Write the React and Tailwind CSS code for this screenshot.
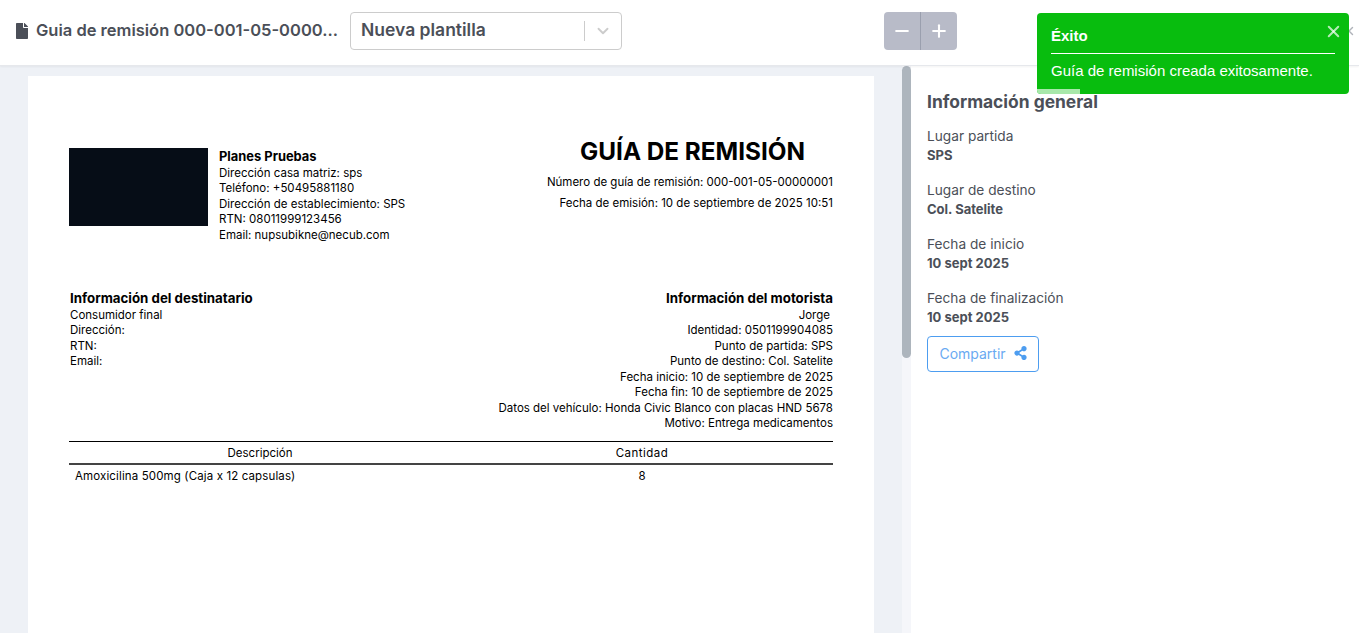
import React from "react";
import { X, ChevronDown, Minus, Plus } from "lucide-react";

const FONT = { fontFamily: "Inter, 'Liberation Sans', sans-serif" };

function FileIcon() {
  return (
    <svg width="12" height="16" viewBox="0 0 384 512" fill="#4b4f58">
      <path d="M224 136V0H24C10.7 0 0 10.7 0 24v464c0 13.3 10.7 24 24 24h336c13.300 0 24-10.700 24-24V160H248c-13.200 0-24-10.800-24-24zm160-14.100v6.100H256V0h6.100c6.400 0 12.500 2.500 17 7l97.900 98c4.500 4.500 7 10.600 7 16.900z" />
    </svg>
  );
}

function ShareIcon() {
  return (
    <svg width="13" height="14" viewBox="0 0 448 512" fill="#4d9df0">
      <path d="M352 320c-22.600 0-43.400 7.800-59.800 20.900l-102.500-64.100a96.600 96.600 0 0 0 0-41.700l102.500-64.100C308.600 184.200 329.400 192 352 192c53 0 96-43 96-96S405 0 352 0s-96 43-96 96c0 7.200.8 14.100 2.300 20.800L155.800 181C139.400 167.800 118.600 160 96 160c-53 0-96 43-96 96s43 96 96 96c22.600 0 43.400-7.800 59.800-20.900l102.500 64.100A96.300 96.300 0 0 0 256 416c0 53 43 96 96 96s96-43 96-96-43-96-96-96z" />
    </svg>
  );
}

function Info({ label, value, last }) {
  return (
    <div className={last ? "mb-[10px]" : "mb-[17px]"}>
      <div className="text-[13.7px] leading-[19px] text-[#4b4f58]">{label}</div>
      <div className="text-[13px] leading-[18px] font-bold text-[#4b4f58]">{value}</div>
    </div>
  );
}

export default function App() {
  return (
    <div className="relative h-[633px] w-[1359px] overflow-hidden bg-white" style={FONT}>
      <header className="relative z-10 flex h-[66px] items-center border-b border-[#e6e8ec] bg-white pb-[4px] pl-4 shadow-[0_1px_2px_rgba(0,0,0,0.05)]">
        <FileIcon />
        <div className="ml-2 w-[302px] truncate text-[16.5px] font-semibold text-[#4b4f58]">
          Guia de remisión 000-001-05-0000...
        </div>
        <div className="ml-[12px] flex h-[38px] w-[272px] items-center rounded border border-[#ccc] bg-white pl-[10px]">
          <span className="flex-1 text-[17.5px] font-semibold text-[#4b4f58]">Nueva plantilla</span>
          <span className="h-[20px] w-px bg-[#ccc]" />
          <ChevronDown className="mx-[9px] h-[18px] w-[18px] text-[#ccc]" strokeWidth={2.5} />
        </div>
        <div className="ml-[262px] flex h-[38px] overflow-hidden rounded">
          <div className="flex w-[37px] items-center justify-center border-r border-[#9a9fae] bg-[#b8bbc8] text-white">
            <Minus className="h-5 w-5" strokeWidth={2.5} />
          </div>
          <div className="flex w-[36px] items-center justify-center bg-[#b8bbc8] text-white">
            <Plus className="h-5 w-5" strokeWidth={2.5} />
          </div>
        </div>
        <X className="absolute left-[1342px] top-[24px] h-[14px] w-[14px] text-[#b0b3ba]" strokeWidth={2.5} />
      </header>

      <div className="flex h-[567px]">
        <main className="w-[902px] overflow-hidden bg-[#eef1f6] pl-[28px] pt-[10px]">
          <div className="h-[600px] w-[846px] bg-white pl-[41px] pr-[41px] pt-[72px] text-[11.5px] text-black">
            <div className="flex justify-between">
              <div className="flex">
                <div className="h-[78px] w-[139px] bg-[#060d17]" />
                <div className="ml-[11px] pt-[1px] leading-[15.6px]">
                  <div className="mb-[1px] text-[12.9px] font-bold">Planes Pruebas</div>
                  <div>Dirección casa matriz: sps</div>
                  <div>Teléfono: +50495881180</div>
                  <div>Dirección de establecimiento: SPS</div>
                  <div>RTN: 08011999123456</div>
                  <div>Email: nupsubikne@necub.com</div>
                </div>
              </div>
              <div className="-mt-[12px] flex flex-col items-end">
                <div className="mr-[28px] text-[24.3px] font-bold leading-[30px]">GUÍA DE REMISIÓN</div>
                <div className="mt-[8px] leading-[16px]">Número de guía de remisión: 000-001-05-00000001</div>
                <div className="mt-[5px] leading-[16px]">Fecha de emisión: 10 de septiembre de 2025 10:51</div>
              </div>
            </div>

            <div className="mt-[47px] flex justify-between leading-[15.45px]">
              <div>
                <div className="mb-[2px] pl-px text-[13.3px] font-bold">Información del destinatario</div>
                <div className="pl-px">Consumidor final</div>
                <div className="pl-px">Dirección:</div>
                <div className="pl-px">RTN:</div>
                <div className="pl-px">Email:</div>
              </div>
              <div className="text-right">
                <div className="mb-[2px] text-[13.3px] font-bold">Información del motorista</div>
                <div className="pr-[3px]">Jorge</div>
                <div>Identidad: 0501199904085</div>
                <div>Punto de partida: SPS</div>
                <div>Punto de destino: Col. Satelite</div>
                <div>Fecha inicio: 10 de septiembre de 2025</div>
                <div>Fecha fin: 10 de septiembre de 2025</div>
                <div>Datos del vehículo: Honda Civic Blanco con placas HND 5678</div>
                <div>Motivo: Entrega medicamentos</div>
              </div>
            </div>

            <div className="mt-[9.7px] grid h-[24px] grid-cols-2 border-t-[1.5px] border-b-2 border-t-black border-b-[#444] text-center leading-[22px]">
              <div>Descripción</div>
              <div className="tracking-[0.5px]">Cantidad</div>
            </div>
            <div className="grid grid-cols-2 pt-[3px] leading-[16px]">
              <div className="pl-[6px] tracking-[0.13px]">Amoxicilina 500mg (Caja x 12 capsulas)</div>
              <div className="text-center">8</div>
            </div>
          </div>
        </main>

        <div className="h-full w-[9px] bg-[#f5f6fa]">
          <div className="h-[292px] rounded-full bg-[#adb5bd]" />
        </div>

        <aside className="flex-1 bg-white pl-[16px] pt-[25px]">
          <h2 className="mb-[14px] text-[17.4px] font-bold leading-[22px] text-[#4b4f58]">Información general</h2>
          <Info label="Lugar partida" value="SPS" />
          <Info label="Lugar de destino" value="Col. Satelite" />
          <Info label="Fecha de inicio" value="10 sept 2025" />
          <Info label="Fecha de finalización" value="10 sept 2025" last />
          <button className="flex h-[36px] w-[112px] items-center justify-center gap-[8px] rounded border border-[#4d9df0] pb-[2px] text-[14px] text-[#6aaaf2]">
            Compartir <ShareIcon />
          </button>
        </aside>
      </div>

      <div
        className="absolute left-[1037px] top-[13px] z-20 h-[81px] w-[312px] overflow-hidden rounded bg-[#08bd0e] text-white"
        style={{ fontFamily: "'Liberation Sans', Arial, sans-serif" }}
      >
        <X className="absolute right-[6px] top-[9px] h-[19px] w-[19px] text-white/70" strokeWidth={2.5} />
        <div className="mx-[14px] border-b border-white pb-[9px] pt-[14px] text-[15px] font-bold leading-[17px]">Éxito</div>
        <div className="mx-[14px] mt-[8px] text-[15px] leading-[18px]">Guía de remisión creada exitosamente.</div>
        <div className="absolute bottom-0 left-0 h-[5px] w-[43px] bg-[#a8e8aa]" />
      </div>
    </div>
  );
}
